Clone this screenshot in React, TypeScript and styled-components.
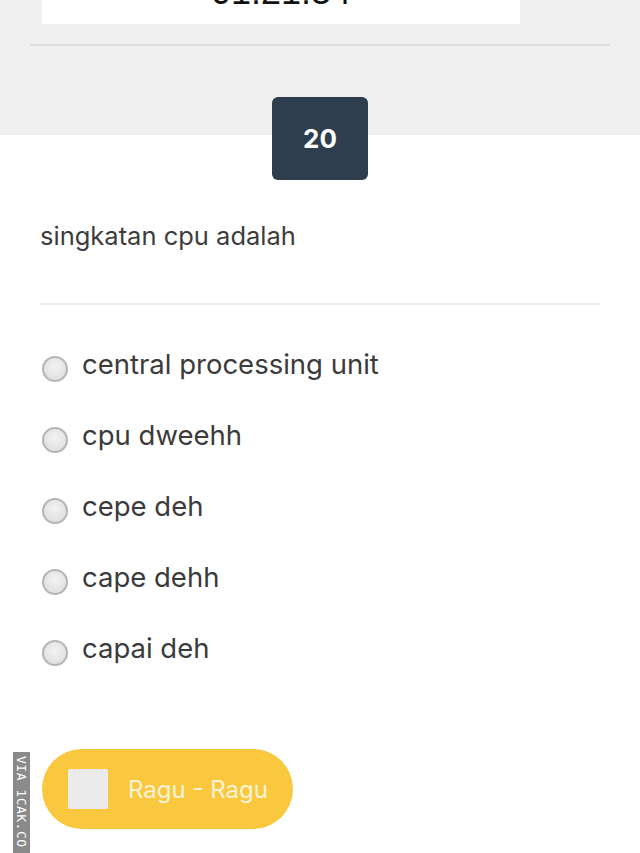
import * as React from "react";
import styled, { createGlobalStyle } from "styled-components";

const GlobalStyle = createGlobalStyle`
  html, body {
    margin: 0;
    padding: 0;
    background: #ffffff;
    overflow: hidden;
  }
  body {
    font-family: Inter, Roboto, "Noto Sans", sans-serif;
    color: #3a3a3a;
  }
`;

const Page = styled.div`
  position: relative;
  width: 640px;
  height: 853px;
  overflow: hidden;
`;

// grey header, scrolled so only the bottom of the timer shows
const TopPanel = styled.div`
  background: #f0f0f0;
  margin-top: -50px;
  padding: 0 30px;
`;

const TimerCard = styled.div`
  width: 478px;
  margin-left: 12px;
  background: #ffffff;
  padding: 24px 0 14px;
  text-align: center;
  font-family: "Liberation Sans", Arial, sans-serif;
  font-size: 36px;
  line-height: 36px;
  color: #111;
`;

const Rule = styled.hr`
  border: none;
  height: 2px;
  margin: 20px 0 51px;
  background: #dedede;
`;

const BadgeRow = styled.div`
  display: flex;
  justify-content: center;
`;

const NumberBadge = styled.div`
  width: 96px;
  height: 83px;
  margin-bottom: -45px;
  border-radius: 6px;
  background: #2f3e4f;
  color: #ffffff;
  display: flex;
  align-items: center;
  justify-content: center;
  font-weight: 700;
  font-size: 26px;
`;

const Content = styled.div`
  padding: 86px 40px 0;
`;

const Question = styled.div`
  font-size: 25.5px;
  line-height: 30px;
  color: #3d3d3d;
`;

const Divider = styled.div`
  height: 2px;
  background: #eaeaea;
  margin: 52px 0 23px;
`;

const Options = styled.div`
  display: flex;
  flex-direction: column;
`;

const Option = styled.label`
  display: flex;
  align-items: center;
  height: 71px;
  gap: 14px;
  font-size: 27.5px;
  color: #3b3b3b;
  cursor: pointer;
`;

const Radio = styled.span`
  width: 26px;
  height: 26px;
  margin-left: 2px;
  margin-top: 11px;
  box-sizing: border-box;
  border-radius: 50%;
  border: 2px solid #b5b5b5;
  background: radial-gradient(circle at 50% 40%, #f2f2f2 0%, #e2e2e2 70%, #d8d8d8 100%);
  flex-shrink: 0;
`;

const Footer = styled.div`
  padding: 66px 0 0 2px;
`;

const DoubtButton = styled.button`
  display: flex;
  align-items: center;
  gap: 20px;
  width: 251px;
  height: 80px;
  padding: 0 0 0 26px;
  border: none;
  border-radius: 40px;
  background: #f9c83f;
  font-family: Inter, Roboto, "Noto Sans", sans-serif;
  font-size: 24px;
  color: #fdf3d6;
  cursor: pointer;
`;

const CheckSquare = styled.span`
  width: 40px;
  height: 40px;
  border-radius: 2px;
  background: #ebebeb;
  flex-shrink: 0;
`;

const Watermark = styled.div`
  position: absolute;
  left: 13px;
  top: 752px;
  width: 17px;
  height: 110px;
  background: #8a8a8a;
  color: #ffffff;
  font-family: "DejaVu Sans Mono", monospace;
  font-size: 13px;
  writing-mode: vertical-rl;
  display: flex;
  align-items: center;
  padding-top: 4px;
  letter-spacing: 0.5px;
`;

const answers = [
  "central processing unit",
  "cpu dweehh",
  "cepe deh",
  "cape dehh",
  "capai deh",
];

export default function App() {
  return (
    <Page>
      <GlobalStyle />
      <TopPanel>
        <TimerCard>01:21:34</TimerCard>
        <Rule />
        <BadgeRow>
          <NumberBadge>20</NumberBadge>
        </BadgeRow>
      </TopPanel>
      <Content>
        <Question>singkatan cpu adalah</Question>
        <Divider />
        <Options>
          {answers.map((a) => (
            <Option key={a}>
              <Radio />
              {a}
            </Option>
          ))}
        </Options>
        <Footer>
          <DoubtButton>
            <CheckSquare />
            Ragu - Ragu
          </DoubtButton>
        </Footer>
      </Content>
      <Watermark>VIA 1CAK.CO</Watermark>
    </Page>
  );
}
